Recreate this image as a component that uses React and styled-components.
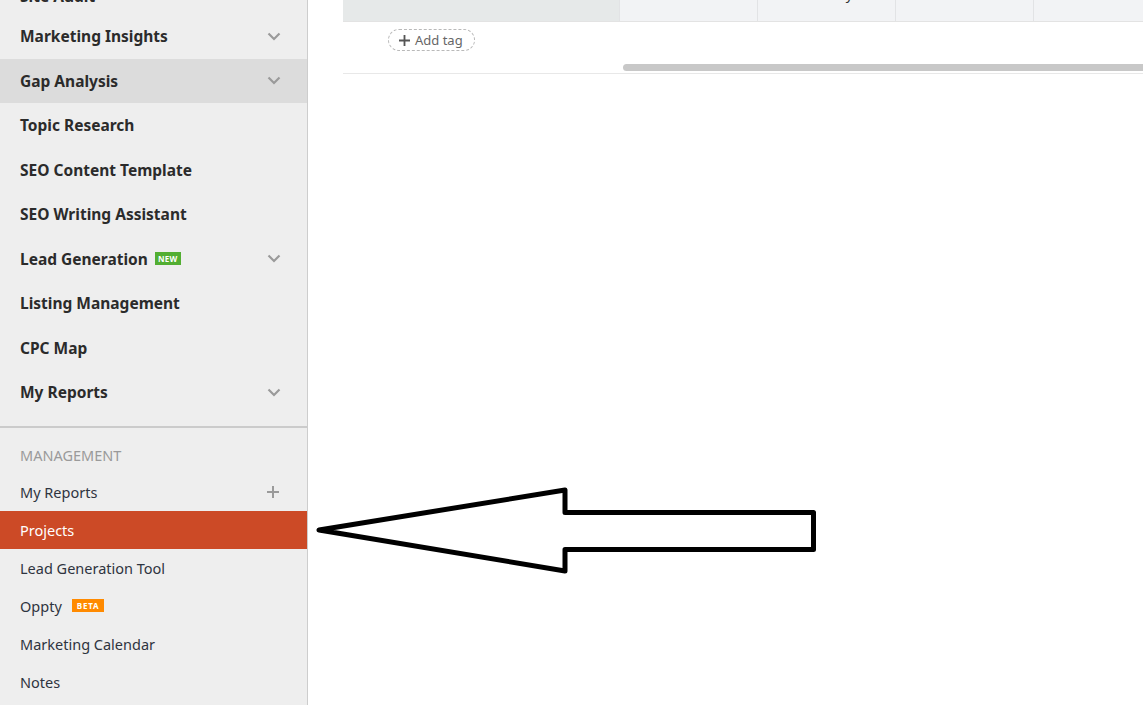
import styled, { createGlobalStyle } from 'styled-components';

const GlobalStyle = createGlobalStyle`
  html, body {
    margin: 0;
    padding: 0;
    height: 100%;
    overflow: hidden;
    background: #ffffff;
  }
  body {
    font-family: "Noto Sans", "Open Sans", "Liberation Sans", sans-serif;
    color: #2c2c2c;
  }
  #root {
    height: 100%;
  }
`;

const Page = styled.div`
  position: relative;
  display: flex;
  width: 1143px;
  height: 705px;
  overflow: hidden;
`;

// 왼쪽 메뉴
const Sidebar = styled.nav`
  flex: 0 0 307px;
  height: 100%;
  background-color: #eeeeee;
  border-right: 1px solid #cdcdcd;
  overflow: hidden;
`;

const ToolList = styled.ul`
  list-style: none;
  margin: -23px 0 0 0;
  padding: 0 0 11px 0;
  border-bottom: 2px solid #cbcbcb;
`;

const ToolItem = styled.li`
  display: flex;
  align-items: center;
  height: ${(props) => (props.first ? '37px' : '44.5px')};
  padding: 0 26px 0 20px;
  font-size: 15.5px;
  font-weight: 700;
  color: #2b2b2b;
  background-color: ${(props) => (props.active ? '#dcdcdc' : 'transparent')};
`;

const ItemLabel = styled.span`
  display: flex;
  align-items: center;
  gap: ${(props) => props.gap || 8}px;
  flex: 1;
`;

const Badge = styled.span`
  display: inline-block;
  height: 13px;
  line-height: 13px;
  padding: 0 ${(props) => props.pad}px;
  font-size: 8px;
  font-weight: 700;
  letter-spacing: ${(props) => props.spacing}px;
  color: #ffffff;
  background-color: ${(props) => props.color};
`;

const Section = styled.div`
  padding-top: 10px;
`;

const SectionTitle = styled.div`
  height: 35px;
  line-height: 35px;
  padding-left: 20px;
  font-size: 14.5px;
  color: #9a9a9a;
  text-transform: uppercase;
`;

const ManageList = styled.ul`
  list-style: none;
  margin: 0;
  padding: 0;
`;

const ManageItem = styled.li`
  display: flex;
  align-items: center;
  height: 38px;
  padding: 0 28px 0 20px;
  font-size: 14.5px;
  color: ${(props) => (props.active ? '#ffffff' : '#2e3440')};
  background-color: ${(props) => (props.active ? '#cc4a26' : 'transparent')};
`;

// 오른쪽 본문
const Main = styled.main`
  flex: 1;
  min-width: 0;
  padding-left: 35px;
  overflow: hidden;
`;

const Table = styled.div`
  width: 900px;
`;

const HeadRow = styled.div`
  display: flex;
  height: 21px;
  border-bottom: 1px solid #e3e3e3;
`;

const HeadCell = styled.div`
  flex: 0 0 ${(props) => props.width}px;
  box-sizing: border-box;
  background-color: ${(props) => (props.first ? '#e6e9e9' : '#f2f3f5')};
  border-left: ${(props) => (props.first ? 'none' : '1px solid #e2e3e5')};
  font-size: 14px;
  line-height: 14px;
  color: #333;
  text-align: center;
  overflow: hidden;
`;

const CutText = styled.span`
  display: block;
  margin-top: -13px;
`;

const BodyRow = styled.div`
  width: 800px;
  height: 51px;
  border-bottom: 1px solid #e8e8e8;
  display: flex;
  flex-direction: column;
`;

const AddTag = styled.button`
  display: inline-flex;
  align-items: center;
  gap: 5px;
  align-self: flex-start;
  height: 22px;
  margin: 7px 0 0 45px;
  padding: 0 11px 0 10px;
  box-sizing: border-box;
  border: 1px dashed #b9b9b9;
  border-radius: 11px;
  background: #ffffff;
  font-family: inherit;
  font-size: 13px;
  color: #666666;
`;

const ScrollThumb = styled.div`
  height: 7px;
  margin: 13px 0 0 280px;
  border-radius: 4px 0 0 4px;
  background-color: #c8c8c8;
`;

const ArrowMark = styled.svg`
  position: absolute;
  left: 0;
  top: 0;
  pointer-events: none;
`;

const Chevron = () => (
  <svg width="14" height="9" viewBox="0 0 14 9">
    <path d="M1.5 1.5 L7 7 L12.5 1.5" fill="none" stroke="#9a9a9a" strokeWidth="2.2" />
  </svg>
);

const Plus = ({ size = 12, color = '#9a9a9a', width = 2 }) => (
  <svg width={size} height={size} viewBox="0 0 12 12">
    <path d="M6 0 V12 M0 6 H12" stroke={color} strokeWidth={width} />
  </svg>
);

const tools = [
  { name: 'Site Audit' },
  { name: 'Marketing Insights', more: true },
  { name: 'Gap Analysis', more: true, active: true },
  { name: 'Topic Research' },
  { name: 'SEO Content Template' },
  { name: 'SEO Writing Assistant' },
  { name: 'Lead Generation', more: true, badge: 'NEW' },
  { name: 'Listing Management' },
  { name: 'CPC Map' },
  { name: 'My Reports', more: true },
];

const manage = [
  { name: 'My Reports', add: true },
  { name: 'Projects', active: true },
  { name: 'Lead Generation Tool' },
  { name: 'Oppty', badge: 'BETA' },
  { name: 'Marketing Calendar' },
  { name: 'Notes' },
];

const App = () => {
  return (
    <>
      <GlobalStyle />
      <Page>
        <Sidebar>
          <ToolList>
            {tools.map((item, index) => (
              <ToolItem key={item.name} active={item.active} first={index === 0}>
                <ItemLabel gap={7}>
                  {item.name}
                  {item.badge && (
                    <Badge color="#52ae32" pad={3} spacing={0.3}>
                      {item.badge}
                    </Badge>
                  )}
                </ItemLabel>
                {item.more && <Chevron />}
              </ToolItem>
            ))}
          </ToolList>
          <Section>
            <SectionTitle>Management</SectionTitle>
            <ManageList>
              {manage.map((item) => (
                <ManageItem key={item.name} active={item.active}>
                  <ItemLabel gap={10}>
                    {item.name}
                    {item.badge && (
                      <Badge color="#ff8a00" pad={5} spacing={0.8}>
                        {item.badge}
                      </Badge>
                    )}
                  </ItemLabel>
                  {item.add && <Plus />}
                </ManageItem>
              ))}
            </ManageList>
          </Section>
        </Sidebar>
        <Main>
          <Table>
            <HeadRow>
              <HeadCell first width={276} />
              <HeadCell width={138} />
              <HeadCell width={138}>
                <CutText>Country</CutText>
              </HeadCell>
              <HeadCell width={138} />
              <HeadCell width={138} />
            </HeadRow>
            <BodyRow>
              <AddTag>
                <Plus size={11} color="#555555" width={2} />
                Add tag
              </AddTag>
              <ScrollThumb />
            </BodyRow>
          </Table>
        </Main>
        <ArrowMark width="1143" height="705" viewBox="0 0 1143 705">
          <path
            d="M319 530 L565 490 L565 512.5 L813.5 512.5 L813.5 549.5 L565 549.5 L565 571 Z"
            fill="#ffffff"
            stroke="#000000"
            strokeWidth="5"
            strokeLinejoin="round"
          />
        </ArrowMark>
      </Page>
    </>
  );
};

export default App;
